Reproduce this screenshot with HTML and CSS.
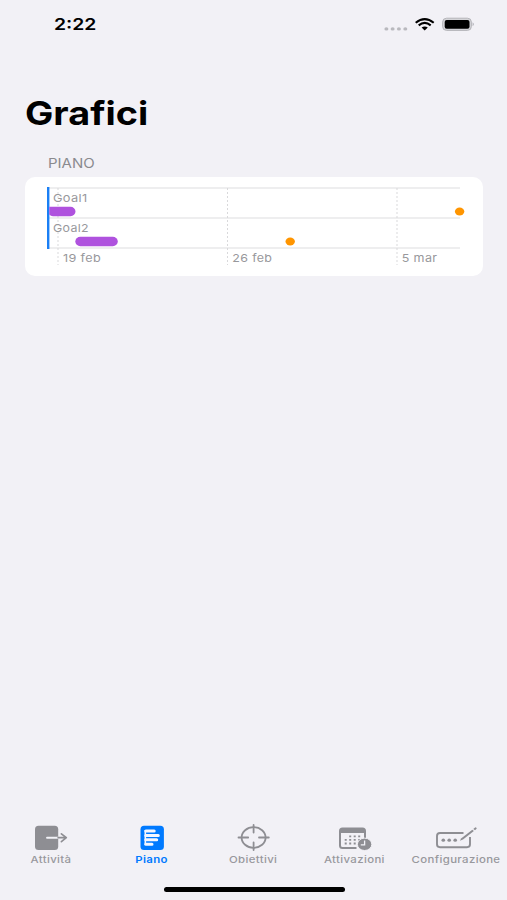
FILE: index.html
```html
<!DOCTYPE html>
<html lang="it">
<head>
<meta charset="utf-8">
<title>Grafici</title>
<link rel="stylesheet" href="styles.css">
</head>
<body>
<div class="screen">
  <header class="status">
    <span class="clock">2:22</span>
    <svg class="indicators" width="92" height="18" viewBox="384 16 92 18">
      <g fill="#b9b9be"><ellipse cx="386.4" cy="28.9" rx="2" ry="1.7"/><ellipse cx="392.6" cy="28.9" rx="2" ry="1.7"/><ellipse cx="398.9" cy="28.9" rx="2" ry="1.7"/><ellipse cx="405.3" cy="28.9" rx="2" ry="1.7"/></g>
      <g fill="none" stroke="#000" stroke-width="2.1"><path d="M415.700 22.700Q424.700 15.500 433.700 22.700"/><path d="M418.700 25.300Q424.700 20.600 430.700 25.300"/></g>
      <path d="M421.600 27.600Q424.700 25.300 427.800 27.600L424.700 30.400Z"/>
      <rect x="442.600" y="18.200" width="28.800" height="12.200" rx="4" fill="#d4d4d8" stroke="#b4b4b9" stroke-width="1"/>
      <rect x="444.700" y="20" width="24.800" height="8.700" rx="2"/>
      <path d="M472.600 22.300Q475 24.200 472.600 26.200Z" fill="#aaaab0"/>
    </svg>
  </header>
  <main class="content">
    <h1 class="title">Grafici</h1>
    <h2 class="section">PIANO</h2>
    <section class="card">
      <svg class="chart" width="459" height="99" viewBox="25 177 459 99">
        <g stroke="#dddddf" stroke-width="1"><path d="M48 188H460M48 218H460M48 248H460"/></g>
        <g stroke="#d9d9db" stroke-width="1" stroke-dasharray="2 2"><path d="M58 188V265M227.500 188V265M397 188V265"/></g>
        <path d="M48.200 187V249" stroke="#1a7ff5" stroke-width="2.400"/>
        <path d="M49.300 206.800H70.500A5 4.700 0 0 1 70.500 216.200H53A5 4.700 0 0 1 49.300 214.500Z" fill="#af52de"/>
        <rect x="75.300" y="236.800" width="42.500" height="9.400" rx="5" ry="4.700" fill="#af52de"/>
        <ellipse cx="459.600" cy="211.500" rx="4.700" ry="4" fill="#ff9500"/>
        <ellipse cx="290.200" cy="241.500" rx="4.700" ry="4" fill="#ff9500"/>
        <g class="chart-text">
          <text x="53" y="202" textLength="34.500" lengthAdjust="spacingAndGlyphs">Goal1</text>
          <text x="53" y="232" textLength="36" lengthAdjust="spacingAndGlyphs">Goal2</text>
          <text x="63" y="262.200" textLength="38" lengthAdjust="spacingAndGlyphs">19 feb</text>
          <text x="232.300" y="262.200" textLength="40" lengthAdjust="spacingAndGlyphs">26 feb</text>
          <text x="401.800" y="262.200" textLength="35.500" lengthAdjust="spacingAndGlyphs">5 mar</text>
        </g>
      </svg>
    </section>
  </main>
  <nav class="tabs">
    <a class="tab">
      <svg width="34" height="28" viewBox="34 824 34 28">
        <rect x="35" y="825.700" width="23.200" height="24.200" rx="3.500" fill="#8e8e93"/>
        <path d="M47 837.700H58.200" stroke="#f2f2f7" stroke-width="1.900" stroke-linecap="round"/>
        <path d="M58.200 837.700H66M61.400 833.800L66.300 837.700L61.400 841.600" fill="none" stroke="#8e8e93" stroke-width="1.700" stroke-linecap="round" stroke-linejoin="round"/>
      </svg>
      <span class="label">Attività</span>
    </a>
    <a class="tab active">
      <svg width="26" height="28" viewBox="139 824 26 28">
        <rect x="140.500" y="825.700" width="23.400" height="24.300" rx="3.500" fill="#007aff"/>
        <path d="M145.800 831H154.200M145.800 835.400H158.300M145.800 839.800H156.700M145.800 844.200H152" stroke="#f5f7ff" stroke-width="3" stroke-linecap="round"/>
        <path d="M145.300 830V845" stroke="#f5f7ff" stroke-width="1.600"/>
      </svg>
      <span class="label">Piano</span>
    </a>
    <a class="tab">
      <svg width="34" height="28" viewBox="237 824 34 28">
        <g fill="none" stroke="#8e8e93" stroke-width="1.800" stroke-linecap="round"><ellipse cx="253.600" cy="837.500" rx="12" ry="10.300"/><path d="M253.600 825V832.500M253.600 842.500V850M238.500 837.500H248.200M259 837.500H268.800"/></g>
      </svg>
      <span class="label">Obiettivi</span>
    </a>
    <a class="tab">
      <svg width="36" height="28" viewBox="338 824 36 28">
        <path d="M343.500 827.500H363.500Q367 827.500 367 831V838H365V833H342V845.500Q342 847 343.500 847H357.500V849H343.500Q340 849 340 845.500V831Q340 827.500 343.500 827.500Z" fill="#8e8e93"/>
        <g stroke="#8e8e93" stroke-width="1.800" stroke-dasharray="2 2.500"><path d="M350.200 836.300H361.500M345.700 839.900H361.500M345.700 843.500H357"/></g>
        <ellipse cx="365.600" cy="844.300" rx="7.200" ry="6.200" fill="#8e8e93" stroke="#f2f1f6" stroke-width="1"/>
        <path d="M365.600 840.500V844.800H361.800" fill="none" stroke="#f2f2f7" stroke-width="1.300"/>
      </svg>
      <span class="label">Attivazioni</span>
    </a>
    <a class="tab">
      <svg width="44" height="28" viewBox="434 824 44 28">
        <path d="M463.500 833H440Q437 833 437 836V844.300Q437 847.200 440 847.200H467Q470 847.200 470 844.300V837" fill="none" stroke="#8e8e93" stroke-width="1.900"/>
        <g fill="#8e8e93"><ellipse cx="443.300" cy="840.200" rx="1.800" ry="1.600"/><ellipse cx="449.200" cy="840.200" rx="1.800" ry="1.600"/><ellipse cx="455.200" cy="840.200" rx="1.800" ry="1.600"/><path d="M459.800 840.800L461.400 838.200L472.300 829.800L473.900 831.100L463 839.600Z"/><path d="M473.300 828.900L474.800 827.700Q475.700 827 476.400 827.700T476.300 829.100L475 830.200Z"/></g>
      </svg>
      <span class="label">Configurazione</span>
    </a>
  </nav>
  <div class="home"></div>
</div>
</body>
</html>
```
FILE: styles.css
```css
body { margin: 0; background: #f2f1f6; font-family: Inter, "Liberation Sans", sans-serif; }
.screen { width: 507px; height: 900px; display: flex; flex-direction: column; background: #f2f1f6; overflow: hidden; }
.status { height: 34px; padding: 16px 31px 0 54px; box-sizing: border-box; display: flex; justify-content: space-between; }
.clock { margin-top: -1px; font-size: 16px; line-height: 18px; font-weight: 600; transform: scaleX(1.21); transform-origin: left; }
.indicators, .chart { display: block; }
.content { flex: 1; padding: 59px 24px 0 25px; }
.title { margin: 0; width: max-content; font-size: 33px; line-height: 40px; font-weight: 700; transform: scaleX(1.145); transform-origin: left; }
.section { margin: 23px 0 5px 23px; width: max-content; font-size: 12.500px; line-height: 16px; font-weight: 400; color: #8a8a8e; transform: scaleX(1.2); transform-origin: left; }
.card { height: 99px; background: #fff; border-radius: 10px; }
.chart-text { font-size: 11px; fill: #98989c; letter-spacing: .3px; }
.tabs { height: 63px; display: grid; grid-template-columns: repeat(5, 101.250px); }
.tab { display: flex; flex-direction: column; align-items: center; color: #98989d; }
.tab:nth-child(n+3) { padding-left: 1px; }
.tab svg { display: block; }
.label { margin-top: 2px; font-size: 9.500px; line-height: 12px; font-weight: 500; letter-spacing: .3px; transform: scaleX(1.2); white-space: nowrap; }
.active { color: #007aff; }
.active .label { font-weight: 600; }
.home { width: 181px; height: 5px; margin: 0 auto 8px 163.500px; border-radius: 3px; background: #000; }
```
